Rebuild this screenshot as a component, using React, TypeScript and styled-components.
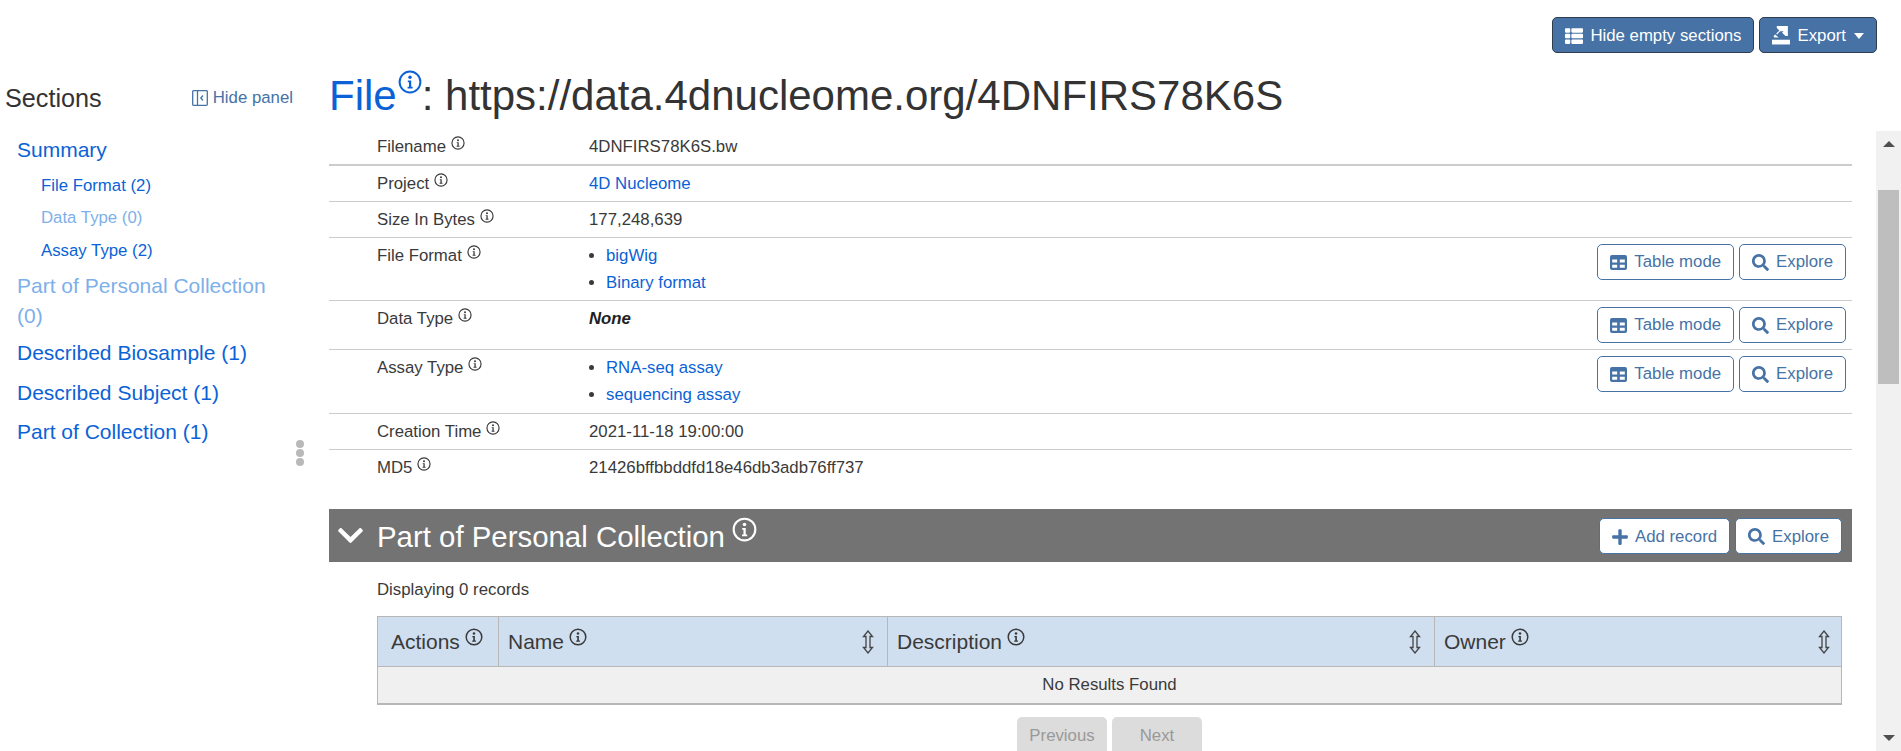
import * as React from "react"
import styled, { createGlobalStyle } from "styled-components"
import { FaChevronDown, FaPlus, FaSearch, FaThList } from "react-icons/fa"

const GlobalStyle = createGlobalStyle`
  html { font-size: 16.8px; }
  body {
    margin: 0;
    background: #fff;
    color: #333;
    font-family: "Liberation Sans", Arial, sans-serif;
    line-height: 1.5;
  }
  * { box-sizing: border-box; }
`

const Page = styled.div`
  display: flex;
  flex-direction: column;
  width: 1901px;
  height: 751px;
  overflow: hidden;
`

const TopBar = styled.div`
  display: flex;
  justify-content: flex-end;
  gap: 5px;
  height: 70px;
  padding: 17px 24px 0 0;
`

const Columns = styled.div`
  display: flex;
  flex: 1;
  min-height: 0;
`

const Sidebar = styled.aside`
  display: flex;
  flex-direction: column;
  flex: none;
  width: 329px;
  padding: 10px 36px 0 5px;
`

const SidebarHead = styled.div`
  display: flex;
  align-items: center;
  justify-content: space-between;
  height: 36px;
  margin-bottom: 18.2px;
`

const SidebarTitle = styled.h4`
  margin: 0;
  font-size: 25.2px;
  font-weight: 400;
  line-height: 36px;
  color: #333;
`

const HidePanel = styled.a`
  display: flex;
  align-items: center;
  gap: 5px;
  color: #4672a6;
  font-size: 16.8px;
`

const NavLink = styled.a<{ $empty?: boolean; $sub?: boolean; $wrapped?: boolean }>`
  display: block;
  margin-left: ${({ $sub }) => ($sub ? "36px" : "12px")};
  margin-bottom: ${({ $sub, $wrapped }) => ($sub ? "6.5px" : $wrapped ? "5.7px" : "8.4px")};
  font-size: ${({ $sub }) => ($sub ? "16.8px" : "21px")};
  line-height: ${({ $sub, $wrapped }) => ($sub ? "26px" : $wrapped ? "30.3px" : "31px")};
  color: ${({ $empty }) => ($empty ? "#7db0ea" : "#0b62d6")};
`

const NavGroup = styled.div`
  margin: -1px 0 1.1px;
`

const DragHandle = styled.div`
  display: flex;
  flex-direction: column;
  align-self: flex-end;
  gap: 1px;
  margin: -16px -11px 0 0;
  span {
    width: 8px;
    height: 8px;
    border-radius: 50%;
    background: #b9b9b9;
  }
`

const Main = styled.main`
  display: flex;
  flex-direction: column;
  flex: 1;
  min-width: 0;
`

const Title = styled.h1`
  display: block;
  height: 61px;
  margin: 0;
  font-size: 42px;
  font-weight: 400;
  line-height: 50px;
  color: #333;
  white-space: nowrap;
`

const TitleLink = styled.span`
  color: #0b62d6;
`

const ScrollRow = styled.div`
  display: flex;
  flex: 1;
  min-height: 0;
`

const Content = styled.div`
  flex: 1;
  min-width: 0;
  overflow: hidden;
  padding-right: 24px;
`

const Scrollbar = styled.div`
  display: flex;
  flex-direction: column;
  align-items: center;
  justify-content: space-between;
  flex: none;
  width: 25px;
  background: #f1f1f1;
  padding: 10px 0;
`

const ScrollThumb = styled.div`
  width: 21px;
  height: 194px;
  margin-top: 43px;
  margin-bottom: auto;
  background: #bebebe;
`

const Arrow = styled.div<{ $down?: boolean }>`
  width: 0;
  height: 0;
  border-left: 6px solid transparent;
  border-right: 6px solid transparent;
  ${({ $down }) => ($down ? "border-top: 6px solid #505050;" : "border-bottom: 6px solid #505050;")}
`

const Row = styled.div<{ $h: number; $heavy?: boolean; $last?: boolean; $top?: number }>`
  display: flex;
  height: ${({ $h }) => $h}px;
  padding: ${({ $top }) => $top ?? 2.6}px 6px 0 48px;
  border-bottom: ${({ $heavy, $last }) => ($last ? "0" : $heavy ? "2px" : "1px")} solid #ccc;
`

const Label = styled.div`
  flex: none;
  width: 212px;
  padding-top: 2px;
  color: #3a3a3a;
`

const Value = styled.div`
  flex: 1;
  padding-top: 2px;
  color: #3a3a3a;
`

const Link = styled.a`
  color: #0b62d6;
`

const None = styled.b`
  font-style: italic;
  color: #222;
`

const Bullets = styled.ul`
  margin: 0;
  padding: 0 0 0 17px;
  li {
    line-height: 27px;
    margin-top: -1px;
    margin-bottom: 1px;
  }
`

const RowActions = styled.div`
  display: flex;
  gap: 5px;
  padding-top: 3px;
`

const HeadActions = styled(RowActions)`
  padding-top: 1px;
`

const Button = styled.button<{ $solid?: boolean }>`
  display: inline-flex;
  align-items: center;
  justify-content: center;
  gap: 7px;
  height: 36px;
  padding: 1px 12px 0;
  border: 1px solid ${({ $solid }) => ($solid ? "#2f3d4c" : "#4672a6")};
  border-radius: 5px;
  background: ${({ $solid }) => ($solid ? "#4672a6" : "#fff")};
  color: ${({ $solid }) => ($solid ? "#fff" : "#4672a6")};
  font-family: inherit;
  font-size: 16.8px;
  white-space: nowrap;
`

const Caret = styled.span`
  width: 0;
  height: 0;
  margin-left: 1px;
  border-left: 5.5px solid transparent;
  border-right: 5.5px solid transparent;
  border-top: 6px solid #fff;
`

const PlusIcon = styled(FaPlus)`
  margin: 0 -1px;
`

const SectionHead = styled.div`
  display: flex;
  align-items: center;
  height: 53px;
  margin-top: 23px;
  padding: 0 10px 0 7px;
  background: #737373;
  color: #fff;
`

const SectionTitle = styled.h3`
  flex: 1;
  margin: 0 0 0 12px;
  font-size: 29.4px;
  font-weight: 400;
  line-height: 1.2;
  color: #fff;
`

const SectionBody = styled.div`
  padding: 15px 10px 0 48px;
`

const Records = styled.div`
  margin-bottom: 14px;
  line-height: 25px;
  color: #3a3a3a;
`

const Grid = styled.div`
  border: 1px solid #b7b7b7;
  border-bottom-width: 2px;
`

const HeadRow = styled.div`
  display: grid;
  grid-template-columns: 120px 389px 547px 1fr;
  height: 50px;
  background: #cfdff0;
  border-bottom: 1px solid #b7b7b7;
`

const HeadCell = styled.div`
  display: flex;
  align-items: center;
  justify-content: space-between;
  padding: 0 12px 0 9px;
  font-size: 21px;
  color: #3a3a3a;
  border-left: 1px solid #b7b7b7;
  &:first-child {
    padding-left: 13px;
    border-left: 0;
  }
  &:last-child {
    padding-right: 10px;
  }
`

const EmptyRow = styled.div`
  height: 36px;
  background: #f0f0f0;
  text-align: center;
  line-height: 36px;
  color: #3a3a3a;
`

const Pager = styled.div`
  display: flex;
  justify-content: center;
  gap: 5px;
  margin-top: 12px;
`

const PagerButton = styled.button`
  width: 90px;
  height: 38px;
  border: 0;
  border-radius: 5px;
  background: #dcdcdc;
  color: #999;
  font-family: inherit;
  font-size: 16.8px;
`

const InfoSvg = styled.svg<{ $size: number; $lift: number; $gap: number }>`
  width: ${({ $size }) => $size}px;
  height: ${({ $size }) => $size}px;
  margin-left: ${({ $gap }) => $gap}px;
  vertical-align: ${({ $lift }) => $lift}px;
`

const Info: React.FC<{ size?: number; lift?: number; gap?: number }> = ({ size = 14, lift = 2, gap = 5 }) => (
  <InfoSvg $size={size} $lift={lift} $gap={gap} viewBox="0 0 24 24" fill="none">
    <circle cx="12" cy="12" r="10.4" stroke="currentColor" strokeWidth="2" />
    <circle cx="12" cy="7.2" r="1.7" fill="currentColor" />
    <path d="M9.8 10.6h3.4v6.2h1.4v1.6H9.6v-1.6h1.4v-4.6H9.8z" fill="currentColor" />
  </InfoSvg>
)

const TableIcon = () => (
  <svg width="17" height="15" viewBox="0 0 17 15" fill="currentColor">
    <path d="M2 0h13a2 2 0 0 1 2 2v11a2 2 0 0 1-2 2H2a2 2 0 0 1-2-2V2a2 2 0 0 1 2-2zm.2 4.6v3h5v-3zm7.6 0v3h5v-3zm-7.6 5.2v3h5v-3zm7.6 0v3h5v-3z" fillRule="evenodd" />
  </svg>
)

const ExportIcon = () => (
  <svg width="18" height="19" viewBox="0 0 17 18" fill="currentColor">
    <path d="M4.5 0H15v9.5h-2.2L9.5 6.4 11 5H7.6l-2.8 3L4 7.2 7 4.2 4.5 2z" />
    <path d="M0 13h17v4.5H0z" />
    <path d="M1.5 9.5 3 8l3.2 3H2z" />
  </svg>
)

const PanelIcon = () => (
  <svg width="16" height="16" viewBox="0 0 16 16" fill="none" stroke="currentColor" strokeWidth="1.3">
    <rect x="0.7" y="0.7" width="14.6" height="14.6" rx="0.8" />
    <path d="M5.5 1v14" />
    <path d="M11 5.5 8.8 8l2.2 2.5" />
  </svg>
)

const SortIcon = () => (
  <svg width="14" height="24" viewBox="0 0 14 24" fill="none" stroke="#444" strokeWidth="1.3">
    <path d="M7 1 11.5 6.5H9V17.5H11.5L7 23 2.5 17.5H5V6.5H2.5Z" />
  </svg>
)

const rows = [
  { label: "Creation Time", value: "2021-11-18 19:00:00", h: 36 },
  { label: "MD5", value: "21426bffbbddfd18e46db3adb76ff737", h: 36, last: true },
]

const RowButtons = () => (
  <RowActions>
    <Button>
      <TableIcon />
      Table mode
    </Button>
    <Button>
      <FaSearch size={17} />
      Explore
    </Button>
  </RowActions>
)

const App: React.FC = () => (
  <Page>
    <GlobalStyle />
    <TopBar>
      <Button $solid>
        <FaThList size={18} />
        Hide empty sections
      </Button>
      <Button $solid>
        <ExportIcon />
        Export
        <Caret />
      </Button>
    </TopBar>
    <Columns>
      <Sidebar>
        <SidebarHead>
          <SidebarTitle>Sections</SidebarTitle>
          <HidePanel>
            <PanelIcon />
            Hide panel
          </HidePanel>
        </SidebarHead>
        <NavLink>Summary</NavLink>
        <NavGroup>
          <NavLink $sub>File Format (2)</NavLink>
          <NavLink $sub $empty>Data Type (0)</NavLink>
          <NavLink $sub>Assay Type (2)</NavLink>
        </NavGroup>
        <NavLink $empty $wrapped>Part of Personal Collection (0)</NavLink>
        <NavLink>Described Biosample (1)</NavLink>
        <NavLink>Described Subject (1)</NavLink>
        <NavLink>Part of Collection (1)</NavLink>
        <DragHandle>
          <span />
          <span />
          <span />
        </DragHandle>
      </Sidebar>
      <Main>
        <Title>
          <TitleLink>
            File
            <Info size={24} lift={16} gap={1} />
          </TitleLink>
          : https://data.4dnucleome.org/4DNFIRS78K6S
        </Title>
        <ScrollRow>
          <Content>
            <Row $h={35} $heavy $top={0.6}>
              <Label>Filename<Info /></Label>
              <Value>4DNFIRS78K6S.bw</Value>
            </Row>
            <Row $h={36}>
              <Label>Project<Info /></Label>
              <Value><Link>4D Nucleome</Link></Value>
            </Row>
            <Row $h={36}>
              <Label>Size In Bytes<Info /></Label>
              <Value>177,248,639</Value>
            </Row>
            <Row $h={63}>
              <Label>File Format<Info /></Label>
              <Value>
                <Bullets>
                  <li><Link>bigWig</Link></li>
                  <li><Link>Binary format</Link></li>
                </Bullets>
              </Value>
              <RowButtons />
            </Row>
            <Row $h={49}>
              <Label>Data Type<Info /></Label>
              <Value><None>None</None></Value>
              <RowButtons />
            </Row>
            <Row $h={64}>
              <Label>Assay Type<Info /></Label>
              <Value>
                <Bullets>
                  <li><Link>RNA-seq assay</Link></li>
                  <li><Link>sequencing assay</Link></li>
                </Bullets>
              </Value>
              <RowButtons />
            </Row>
            {rows.map((r) => (
              <Row key={r.label} $h={r.h} $last={r.last}>
                <Label>{r.label}<Info /></Label>
                <Value>{r.value}</Value>
              </Row>
            ))}
            <SectionHead>
              <FaChevronDown size={29} />
              <SectionTitle>
                Part of Personal Collection
                <Info size={25} lift={5} gap={7} />
              </SectionTitle>
              <HeadActions>
                <Button>
                  <PlusIcon size={18} />
                  Add record
                </Button>
                <Button>
                  <FaSearch size={17} />
                  Explore
                </Button>
              </HeadActions>
            </SectionHead>
            <SectionBody>
              <Records>Displaying 0 records</Records>
              <Grid>
                <HeadRow>
                  <HeadCell><span>Actions<Info size={18} lift={3} /></span></HeadCell>
                  <HeadCell><span>Name<Info size={18} lift={3} /></span><SortIcon /></HeadCell>
                  <HeadCell><span>Description<Info size={18} lift={3} /></span><SortIcon /></HeadCell>
                  <HeadCell><span>Owner<Info size={18} lift={3} /></span><SortIcon /></HeadCell>
                </HeadRow>
                <EmptyRow>No Results Found</EmptyRow>
              </Grid>
              <Pager>
                <PagerButton>Previous</PagerButton>
                <PagerButton>Next</PagerButton>
              </Pager>
            </SectionBody>
          </Content>
          <Scrollbar>
            <Arrow />
            <ScrollThumb />
            <Arrow $down />
          </Scrollbar>
        </ScrollRow>
      </Main>
    </Columns>
  </Page>
)

export default App
